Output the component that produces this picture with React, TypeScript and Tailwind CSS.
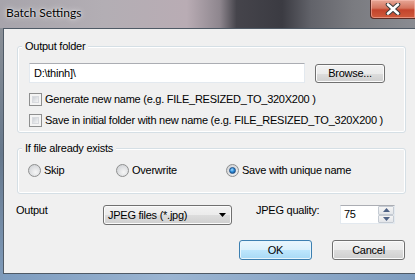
import React from "react";

const tahoma = { fontFamily: '"Liberation Sans", Arial, sans-serif' };

function Checkbox() {
  return (
    <div className="w-[13px] h-[13px] border border-[#8e8f8f] bg-[#f4f4f4] p-[2px] shrink-0">
      <div className="w-full h-full bg-[linear-gradient(135deg,#cbcfd5_0%,#e4e6e9_60%,#f4f4f4_100%)] border border-[#d8dade]" />
    </div>
  );
}

function Radio({ checked }: { checked?: boolean }) {
  return (
    <div className="w-[13px] h-[13px] rounded-full border border-[#8e8f8f] bg-[radial-gradient(circle_at_60%_65%,#f6f6f6_0%,#d6d8db_70%,#c5c7cb_100%)] flex items-center justify-center shrink-0">
      {checked && (
        <div className="w-[7px] h-[7px] rounded-full bg-[radial-gradient(circle_at_40%_35%,#a8dcff_0%,#2f8fdc_45%,#0a3f7a_100%)] border border-[#1f4f86]" />
      )}
    </div>
  );
}

function GroupLabel({ children }: { children: React.ReactNode }) {
  return (
    <span className="absolute left-[4px] top-[-8px] px-[3px] leading-[14px] bg-[#f0f0f0]">
      {children}
    </span>
  );
}

const btn =
  "rounded-[3px] border border-[#707070] bg-[linear-gradient(180deg,#f2f2f2_0%,#ebebeb_50%,#dddddd_50%,#cfcfcf_100%)] shadow-[inset_0_0_0_1px_#fbfbfb] flex items-center justify-center text-[11px] text-black";

const group =
  "relative w-[389px] border border-[#d5dfe5] rounded-[3px] shadow-[inset_0_0_0_1px_#ffffff]";

export default function App() {
  return (
    <div
      className="w-[415px] h-[280px] overflow-hidden flex flex-col bg-[#7f9bbb]"
      style={tahoma}
    >
      {/* Title bar */}
      <div className="h-[28px] shrink-0 flex items-start justify-between bg-[linear-gradient(90deg,#a7a4ab_0%,#b3aeb4_25%,#b9acb4_45%,#8e868e_53%,#45444b_57%,#3b3b42_68%,#62636a_75%,#7a7b80_85%,#8a8c92_100%)]">
        <div
          className="pl-[6px] pt-[5px] text-[12px] leading-[16px] text-black [text-shadow:0_0_6px_rgba(255,255,255,0.9),0_0_2px_rgba(255,255,255,0.9)]"
          style={{ fontFamily: 'Lato, "Noto Sans", sans-serif' }}
        >
          Batch Settings
        </div>
        <div className="w-[46px] h-[19px] mr-[-1px] rounded-bl-[4px] border border-t-0 border-[#5b2a23] bg-[linear-gradient(180deg,#e7a797_0%,#d4745e_45%,#c4442c_55%,#cf5b3c_100%)] shadow-[inset_0_0_0_1px_rgba(255,200,190,0.5)] flex items-center justify-center">
          <svg width="16" height="12" viewBox="0 0 16 12">
            <path
              d="M3 1.5 L13 10.5 M13 1.5 L3 10.5"
              stroke="#3b3b3b"
              strokeWidth="4.6"
              strokeLinecap="round"
            />
            <path
              d="M3 1.5 L13 10.5 M13 1.5 L3 10.5"
              stroke="#ffffff"
              strokeWidth="2.6"
              strokeLinecap="round"
            />
          </svg>
        </div>
      </div>

      {/* Body */}
      <div className="flex flex-1 min-h-0">
        <div className="w-[3px] shrink-0 bg-[linear-gradient(180deg,#8a8f96_0%,#66788c_50%,#7f9bbb_100%)]" />
        <div className="flex-1 flex flex-col">
          <div className="h-[245px] bg-[#f0f0f0] border-l border-t border-[#4f5a66] pl-[13px] pt-[17px] text-[11px] tracking-[-0.25px] text-black">
            {/* Output folder group */}
            <div className={group + " pl-[11px] pt-[16px] pb-[5px]"}>
              <GroupLabel>Output folder</GroupLabel>
              <div className="flex items-center gap-[10px]">
                <div className="w-[276px] h-[20px] bg-white border border-[#e3e9ef] border-t-[#abadb3] flex items-center pl-[4px]">
                  D:\thinh]\
                </div>
                <div className={btn + " w-[70px] h-[19px]"}>Browse...</div>
              </div>
              <div className="flex items-center mt-[10px] h-[13px] gap-[3px]">
                <Checkbox />
                <span className="leading-[13px]">Generate new name (e.g. FILE_RESIZED_TO_320X200 )</span>
              </div>
              <div className="flex items-center mt-[8px] h-[13px] gap-[3px]">
                <Checkbox />
                <span className="leading-[13px]">
                  Save in initial folder with new name (e.g. FILE_RESIZED_TO_320X200 )
                </span>
              </div>
            </div>

            {/* If file already exists group */}
            <div className={group + " mt-[15px] pl-[10px] pt-[15px] pb-[16px]"}>
              <GroupLabel>If file already exists</GroupLabel>
              <div className="flex items-center h-[13px]">
                <div className="w-[88px] flex items-center gap-[3px]">
                  <Radio />
                  <span>Skip</span>
                </div>
                <div className="w-[110px] flex items-center gap-[3px]">
                  <Radio />
                  <span>Overwrite</span>
                </div>
                <div className="flex items-center gap-[3px]">
                  <Radio checked />
                  <span>Save with unique name</span>
                </div>
              </div>
            </div>

            {/* Output row */}
            <div className="flex items-start mt-[10px] ml-[-1px]">
              <div className="w-[87px] leading-[13px]">Output</div>
              <div className={btn + " mt-[1px] w-[129px] h-[20px] !justify-between pl-[4px] pr-[5px]"}>
                <span>JPEG files (*.jpg)</span>
                <svg width="7" height="4" viewBox="0 0 7 4">
                  <path d="M0 0 L7 0 L3.5 4 Z" fill="#000" />
                </svg>
              </div>
              <div className="ml-[24px] w-[84px] leading-[13px]">JPEG quality:</div>
              <div className="mt-[1px] w-[55px] h-[19px] bg-white border border-[#e3e9ef] border-t-[#abadb3] flex items-stretch">
                <div className="flex-1 flex items-center pl-[3px]">75</div>
                <div className="w-[16px] flex flex-col">
                  <div className="flex-1 border border-[#c5cbd3] rounded-[1px] bg-[linear-gradient(180deg,#f5f5f5,#e3e6ea)] flex items-center justify-center">
                    <svg width="7" height="4" viewBox="0 0 7 4">
                      <path d="M0 4 L7 4 L3.5 0 Z" fill="#4d6185" />
                    </svg>
                  </div>
                  <div className="flex-1 border border-[#c5cbd3] rounded-[1px] bg-[linear-gradient(180deg,#f5f5f5,#e3e6ea)] flex items-center justify-center">
                    <svg width="7" height="4" viewBox="0 0 7 4">
                      <path d="M0 0 L7 0 L3.5 4 Z" fill="#4d6185" />
                    </svg>
                  </div>
                </div>
              </div>
            </div>

            {/* Buttons */}
            <div className="flex justify-end gap-[20px] w-[388px] mt-[15px]">
              <div className="w-[73px] h-[20px] rounded-[3px] border border-[#3c7fb1] bg-[linear-gradient(180deg,#eaf6fd_0%,#d9f0fc_50%,#bee6fd_50%,#a7d9f5_100%)] shadow-[inset_0_0_0_1px_#e6f5fd] flex items-center justify-center">
                OK
              </div>
              <div className={btn + " w-[73px] h-[20px]"}>Cancel</div>
            </div>
          </div>
          <div className="h-[1px] bg-[#4f5a66]" />
          <div className="flex-1 bg-[linear-gradient(90deg,#7d9cbf_0%,#9bb5d2_40%,#7f9dbf_100%)]" />
        </div>
      </div>
    </div>
  );
}
